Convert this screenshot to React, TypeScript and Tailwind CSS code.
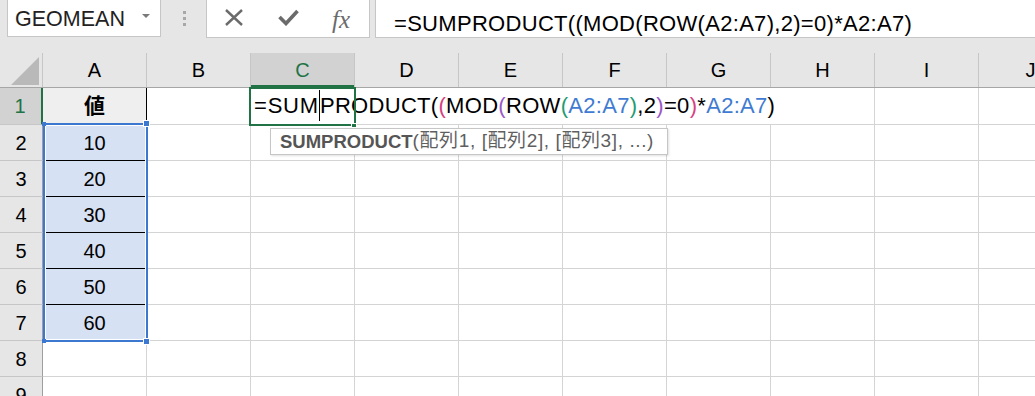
import React from 'react';

const cols = ['A', 'B', 'C', 'D', 'E', 'F', 'G', 'H', 'I', 'J'];
const values = ['10', '20', '30', '40', '50', '60'];

function CornerTriangle() {
  return (
    <svg width="43" height="35" viewBox="0 0 43 35" className="block">
      <polygon points="39,4 39,32 11,32" fill="#b9b9b9" />
    </svg>
  );
}

function FormulaText() {
  const pink = 'text-[#d6417f]';
  const purple = 'text-[#9b59c9]';
  const green = 'text-[#1f9c72]';
  const blue = 'text-[#3f7bd2]';
  return (
    <div className="absolute left-[254px] top-[35px] h-[37px] flex items-center pb-[2px] whitespace-nowrap text-[22px] tracking-[0.3px] text-black">
      <span className="tracking-[0.8px]">=SUM</span>
      <span className="self-stretch w-px bg-black my-[2px]" />
      <span>PRODUCT(</span>
      <span className={pink}>(</span>
      <span>MOD</span>
      <span className={purple}>(</span>
      <span>ROW</span>
      <span className={green}>(</span>
      <span className={blue}>A2:A7</span>
      <span className={green}>)</span>
      <span>,2</span>
      <span className={purple}>)</span>
      <span>=0</span>
      <span className={pink}>)</span>
      <span>*</span>
      <span className={blue}>A2:A7</span>
      <span>)</span>
    </div>
  );
}

export default function App() {
  return (
    <div className="w-[1035px] h-[396px] overflow-hidden bg-[#e6e6e6] font-['Liberation_Sans','Noto_Sans_CJK_JP',sans-serif] text-black">
      {/* Top bar: name box, buttons, formula bar */}
      <div className="h-[53px] flex items-start">
        <div className="ml-[7px] w-[154px] h-[37px] bg-white border-x border-b border-[#c6c6c6] flex items-start justify-between pt-[8px] pl-[7px] pr-[10px]">
          <span className="text-[21.5px] leading-[22px] text-[#222]">GEOMEAN</span>
          <svg width="8" height="4" viewBox="0 0 8 4" className="mt-[6px]">
            <polygon points="0,0 8,0 4,4" fill="#7a7a7a" />
          </svg>
        </div>
        <div className="w-[45px] h-[37px] flex flex-col items-center justify-center gap-[3px] pl-[2px]">
          <span className="w-[3px] h-[3px] bg-[#a8a8a8]" />
          <span className="w-[3px] h-[3px] bg-[#a8a8a8]" />
          <span className="w-[3px] h-[3px] bg-[#a8a8a8]" />
        </div>
        <div className="w-[164px] h-[38px] bg-white border-x border-b border-[#c6c6c6] flex items-center pl-[17px] pb-[3px]">
          <svg width="20" height="17" viewBox="0 0 20 17">
            <path d="M2 1 L18 16 M18 1 L2 16" stroke="#6b6b6b" strokeWidth="2.4" />
          </svg>
          <svg width="21" height="17" viewBox="0 0 21 17" className="ml-[34px]">
            <path d="M1.5 8 L8 14.5 L19.5 2" stroke="#6b6b6b" strokeWidth="3.6" fill="none" />
          </svg>
          <span className="ml-[33px] font-['Liberation_Serif',serif] italic text-[25px] leading-none text-[#6b6b6b] pt-[5px]">
            fx
          </span>
        </div>
        <div className="ml-[5px] flex-1 h-[38px] bg-white border-l border-b border-[#c6c6c6] pl-[18px] pt-[13px]">
          <span className="text-[22px] leading-[22px] tracking-[0.3px] whitespace-nowrap">
            =SUMPRODUCT((MOD(ROW(A2:A7),2)=0)*A2:A7)
          </span>
        </div>
      </div>

      {/* Grid */}
      <div className="relative">
        {/* Column header */}
        <div className="flex h-[35px] border-b border-[#a6a6a6]">
          <div className="w-[43px] shrink-0 border-r border-[#c6c6c6]">
            <CornerTriangle />
          </div>
          {cols.map((c) => (
            <div
              key={c}
              className={
                c === 'C'
                  ? 'w-[104px] shrink-0 border-r border-[#c6c6c6] bg-[#d2d2d2] text-[#217346] flex items-center justify-center text-[20px] shadow-[inset_0_-2px_0_#217346]'
                  : 'w-[104px] shrink-0 border-r border-[#c6c6c6] flex items-center justify-center text-[20px]'
              }
            >
              {c}
            </div>
          ))}
        </div>

        {/* Row 1 */}
        <div className="flex h-[37px] bg-white">
          <div className="w-[43px] shrink-0 bg-[#d2d2d2] border-b border-[#c6c6c6] border-r-2 border-r-[#217346] flex items-center justify-center text-[20px] text-[#217346] pr-[1px]">
            1
          </div>
          <div className="w-[104px] shrink-0 bg-[#efefef] border-r border-b border-black flex items-center justify-center text-[21px] font-bold">
            値
          </div>
          <div className="w-[104px] shrink-0 border-r border-b border-[#d4d4d4]" />
          <div className="w-[624px] shrink-0 border-r border-b border-[#d4d4d4]" />
          <div className="w-[104px] shrink-0 border-r border-b border-[#d4d4d4]" />
          <div className="w-[104px] shrink-0 border-r border-b border-[#d4d4d4]" />
        </div>

        {/* Rows 2-9 */}
        {[2, 3, 4, 5, 6, 7, 8, 9].map((r) => (
          <div key={r} className="flex h-[36px] bg-white">
            <div className="w-[43px] shrink-0 bg-[#e6e6e6] border-r border-r-[#9e9e9e] border-b border-[#c6c6c6] flex items-center justify-center text-[20px]">
              {r}
            </div>
            {cols.map((c) =>
              c === 'A' && r <= 7 ? (
                <div
                  key={c}
                  className={
                    r < 7
                      ? 'w-[104px] shrink-0 bg-[#d6e1f3] border-r border-b border-black flex items-center justify-center text-[20px]'
                      : 'w-[104px] shrink-0 bg-[#d6e1f3] border-r border-b border-[#d4d4d4] flex items-center justify-center text-[20px]'
                  }
                >
                  {values[r - 2]}
                </div>
              ) : (
                <div key={c} className="w-[104px] shrink-0 border-r border-b border-[#d4d4d4]" />
              )
            )}
          </div>
        ))}

        {/* Overflowing formula in C1 */}
        <FormulaText />

        {/* Active cell border */}
        <div className="absolute left-[249px] top-[34px] w-[107px] h-[39px] border-2 border-[#217346]" />
        <div className="absolute left-[351px] top-[70px] w-[6px] h-[5px] bg-[#217346] border border-white" />

        {/* Reference range A2:A7 */}
        <div className="absolute left-[43px] top-[70px] w-[105px] h-[219px] border-2 border-[#3d78d0] shadow-[inset_0_0_0_1px_white]" />
        <div className="absolute left-[143px] top-[67px] w-[7px] h-[7px] bg-[#3d78d0] border border-white" />
        <div className="absolute left-[143px] top-[285px] w-[7px] h-[7px] bg-[#3d78d0] border border-white" />
        <div className="absolute left-[42px] top-[69px] w-[4px] h-[4px] bg-[#3d78d0]" />
        <div className="absolute left-[42px] top-[286px] w-[4px] h-[4px] bg-[#3d78d0]" />

        {/* Function tooltip */}
        <div className="absolute left-[270px] top-[75px] w-[398px] h-[27px] bg-white border border-[#c6c6c6] shadow-[1px_1px_2px_rgba(0,0,0,0.12)] flex items-center pl-[9px] whitespace-nowrap text-[#5f5f5f]">
          <span className="font-bold text-[18.5px] text-[#555]">SUMPRODUCT</span>
          <span className="text-[19px] tracking-[0.6px]">(配列1, [配列2], [配列3], ...)</span>
        </div>
      </div>
    </div>
  );
}
